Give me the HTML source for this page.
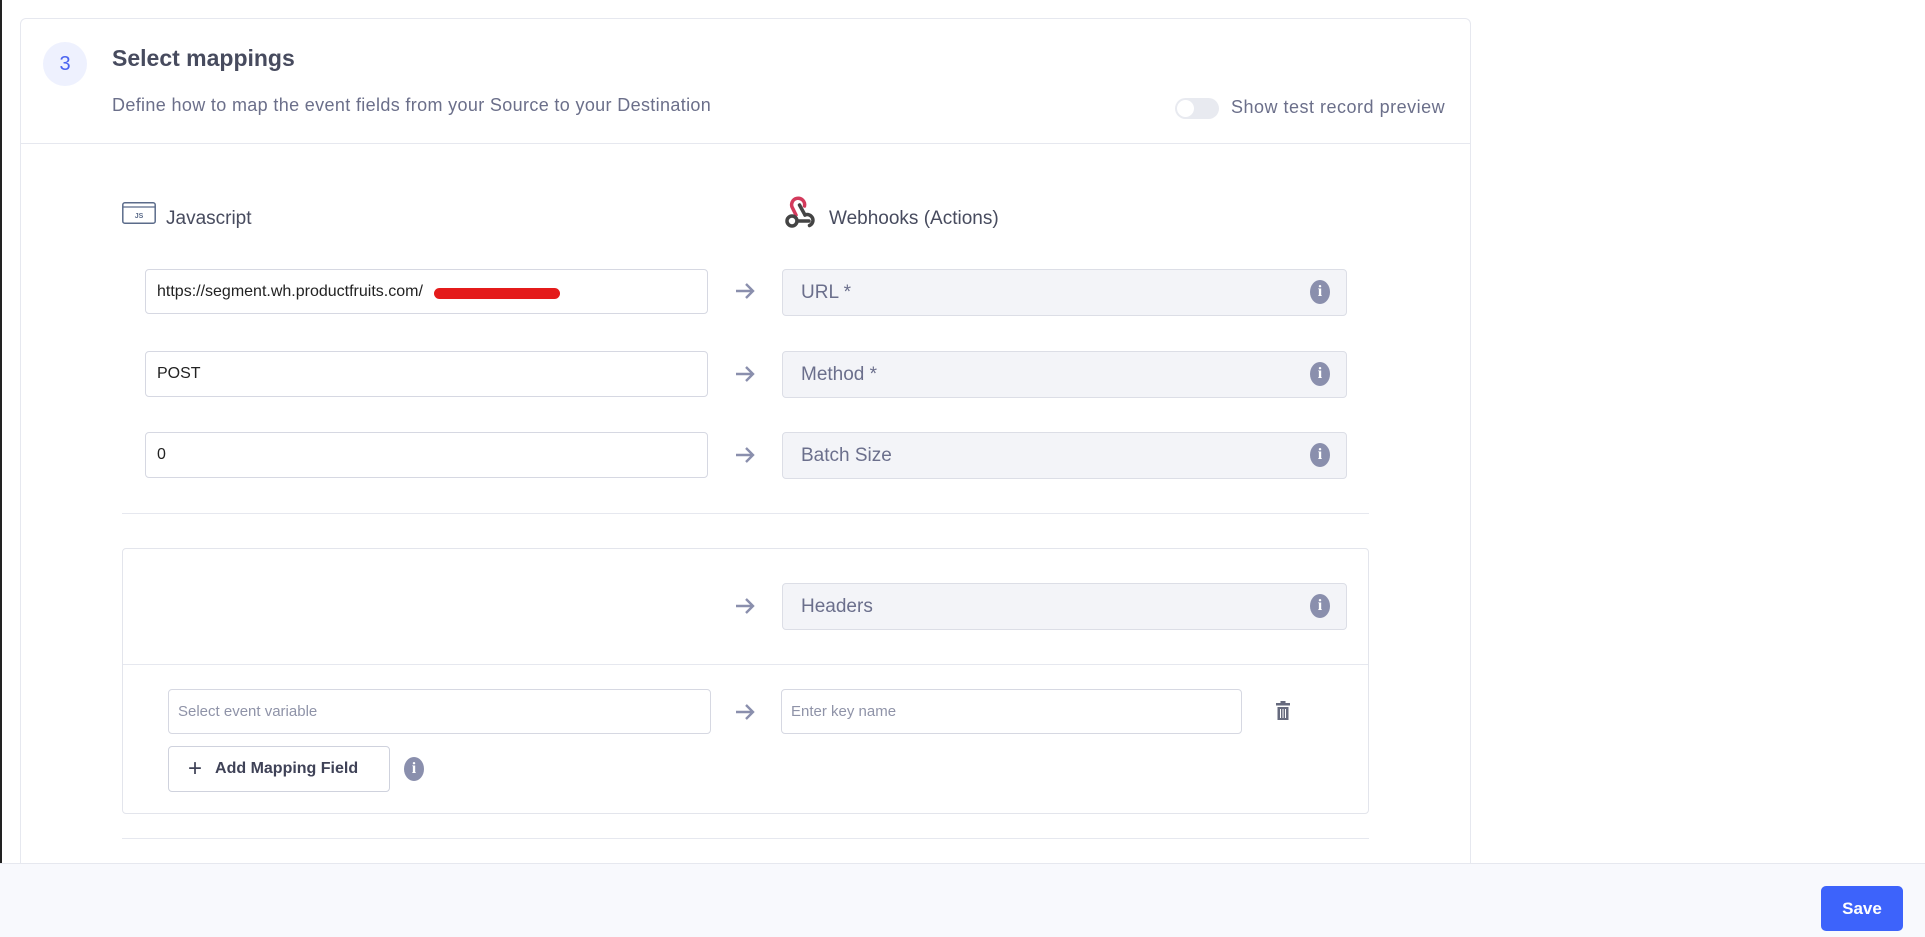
<!DOCTYPE html>
<html><head><meta charset="utf-8"><style>
*{box-sizing:border-box;margin:0;padding:0}
body{width:1925px;height:937px;overflow:hidden;background:#fff;font-family:"Liberation Sans",sans-serif;position:relative;color:#474b6b}
.abs{position:absolute}
.card{left:20px;top:18px;width:1451px;height:900px;border:1px solid #e6e8ef;border-radius:6px;background:#fff}
.inp{position:absolute;border:1px solid #d6d8e2;border-radius:4px;background:#fff;font-size:16px;color:#222;display:flex;align-items:center;padding-left:11px}
.dst{position:absolute;border:1px solid #dcdee6;border-radius:4px;background:#f3f4f8;font-size:19px;color:#6b6f8c;display:flex;align-items:center;padding-left:18px}
.info{position:absolute;width:20px;height:24px;border-radius:50%;background:#8a8fad;color:#fff;font:bold 16px/24px "Liberation Serif",serif;text-align:center}
.arr{position:absolute;width:22px;height:20px}
.hr{position:absolute;height:1px;background:#e6e8ef}
</style></head><body>
<div class="abs" style="left:0;top:0;width:2px;height:937px;background:#222"></div>
<div class="abs card"></div>
<div class="abs" style="left:43px;top:42px;width:44px;height:44px;border-radius:50%;background:#eef1fe;color:#4a63f0;font-size:20px;line-height:44px;text-align:center">3</div>
<div class="abs" style="left:112px;top:45px;font-size:23px;font-weight:bold;color:#474b5e">Select mappings</div>
<div class="abs" style="left:112px;top:95px;font-size:18px;letter-spacing:0.35px;color:#6b6f8a">Define how to map the event fields from your Source to your Destination</div>
<div class="abs" style="left:1175px;top:98px;width:44px;height:21px;border-radius:11px;background:#e8eaf0"><div style="position:absolute;left:2px;top:2px;width:17px;height:17px;border-radius:50%;background:#fff"></div></div>
<div class="abs" style="left:1231px;top:97px;font-size:18px;letter-spacing:0.5px;color:#6b6f8a">Show test record preview</div>
<div class="hr" style="left:21px;top:143px;width:1449px"></div>

<svg class="abs" style="left:122px;top:202px" width="34" height="22" viewBox="0 0 34 22"><rect x="0.8" y="0.8" width="32.4" height="20.4" rx="2" fill="#fff" stroke="#5b6b8a" stroke-width="1.5"/><line x1="1" y1="5" x2="33" y2="5" stroke="#5b6b8a" stroke-width="1.2"/><text x="17" y="16" font-size="7" font-weight="bold" text-anchor="middle" fill="#5b6b8a" font-family="Liberation Sans">JS</text></svg>
<div class="abs" style="left:166px;top:208px;font-size:19px;color:#474b5e">Javascript</div>
<svg class="abs" style="left:783px;top:194px" width="34" height="35" viewBox="0 0 34 35"><g fill="none" stroke-width="3.5" stroke-linecap="round"><path d="M13 21 L9.5 14 A6.5 6.5 0 1 1 21.5 12" stroke="#d33a5c"/><circle cx="9" cy="27" r="5" stroke="#444"/><path d="M14 27 L26 27" stroke="#444"/><path d="M16.5 11 L22 21" stroke="#444"/><path d="M22 21 A5 5 0 1 1 26.5 31.5" stroke="#444"/></g></svg>
<div class="abs" style="left:829px;top:208px;font-size:19px;color:#474b5e">Webhooks (Actions)</div>

<div class="inp" style="left:145px;top:269px;width:563px;height:45px">https://segment.wh.productfruits.com/</div>
<div class="abs" style="left:434px;top:288px;width:126px;height:11px;border-radius:6px;background:#e41b1b"></div>
<div class="inp" style="left:145px;top:351px;width:563px;height:46px">POST</div>
<div class="inp" style="left:145px;top:432px;width:563px;height:46px">0</div>

<svg class="arr" style="left:734px;top:281px" viewBox="0 0 22 20"><path d="M2 10H19M12 3L19 10L12 17" stroke="#8a8fad" stroke-width="2.4" fill="none"/></svg>
<svg class="arr" style="left:734px;top:364px" viewBox="0 0 22 20"><path d="M2 10H19M12 3L19 10L12 17" stroke="#8a8fad" stroke-width="2.4" fill="none"/></svg>
<svg class="arr" style="left:734px;top:445px" viewBox="0 0 22 20"><path d="M2 10H19M12 3L19 10L12 17" stroke="#8a8fad" stroke-width="2.4" fill="none"/></svg>

<div class="dst" style="left:782px;top:269px;width:565px;height:47px">URL *</div><div class="info" style="left:1310px;top:280px">i</div>
<div class="dst" style="left:782px;top:351px;width:565px;height:47px">Method *</div><div class="info" style="left:1310px;top:362px">i</div>
<div class="dst" style="left:782px;top:432px;width:565px;height:47px">Batch Size</div><div class="info" style="left:1310px;top:443px">i</div>

<div class="hr" style="left:122px;top:513px;width:1247px"></div>
<div class="abs" style="left:122px;top:548px;width:1247px;height:266px;border:1px solid #e3e5ec;border-radius:4px"></div>
<div class="hr" style="left:123px;top:664px;width:1245px"></div>
<svg class="arr" style="left:734px;top:596px" viewBox="0 0 22 20"><path d="M2 10H19M12 3L19 10L12 17" stroke="#8a8fad" stroke-width="2.4" fill="none"/></svg>
<div class="dst" style="left:782px;top:583px;width:565px;height:47px">Headers</div><div class="info" style="left:1310px;top:594px">i</div>

<div class="inp" style="left:168px;top:689px;width:543px;height:45px;font-size:15px;color:#8f93a8;padding-left:9px">Select event variable</div>
<svg class="arr" style="left:734px;top:702px" viewBox="0 0 22 20"><path d="M2 10H19M12 3L19 10L12 17" stroke="#8a8fad" stroke-width="2.4" fill="none"/></svg>
<div class="inp" style="left:781px;top:689px;width:461px;height:45px;font-size:15px;color:#8f93a8;padding-left:9px">Enter key name</div>
<svg class="abs" style="left:1275px;top:701px" width="16" height="20" viewBox="0 0 16 20"><rect x="1" y="2" width="14" height="2.5" fill="#666a7e"/><rect x="5.5" y="0" width="5" height="2" fill="#666a7e"/><path d="M2.5 6H13.5V19H2.5Z" fill="#666a7e"/><path d="M5.5 8V17M8 8V17M10.5 8V17" stroke="#fff" stroke-width="1"/></svg>

<div class="abs" style="left:168px;top:746px;width:222px;height:46px;border:1px solid #cfd2dd;border-radius:4px;background:#fff;font-size:16px;font-weight:bold;color:#3f4257;display:flex;align-items:center;padding-left:19px"><span style="font-size:24px;font-weight:normal;margin-right:13px">+</span>Add Mapping Field</div>
<div class="info" style="left:404px;top:757px">i</div>
<div class="hr" style="left:122px;top:838px;width:1247px"></div>

<div class="abs" style="left:0;top:863px;width:1925px;height:74px;background:#f8f9fd;border-top:1px solid #e6e8ef"></div>
<div class="abs" style="left:1821px;top:886px;width:82px;height:45px;border-radius:5px;background:#3d63fb;color:#fff;font-size:17px;font-weight:bold;line-height:45px;text-align:center">Save</div>
</body></html>
